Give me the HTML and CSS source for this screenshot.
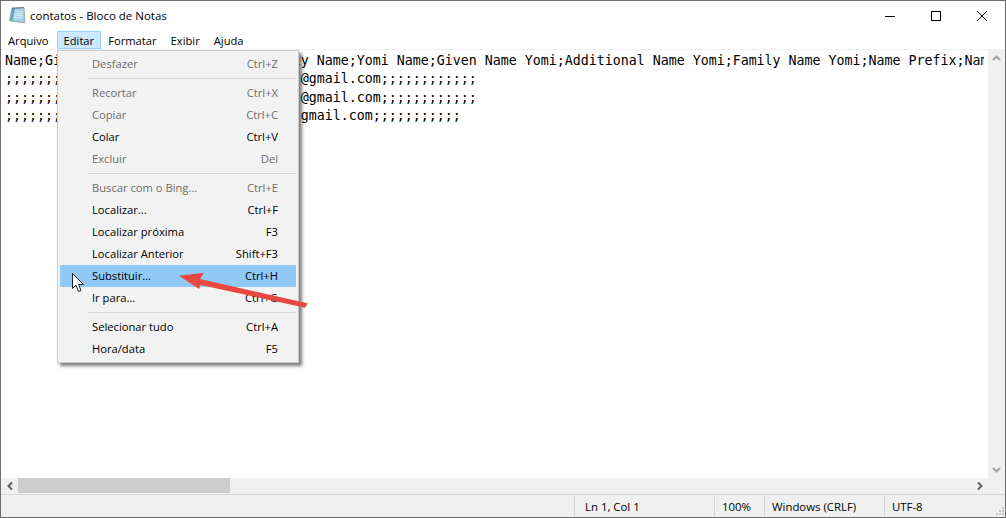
FILE: index.html
```html
<!DOCTYPE html>
<html lang="pt">
<head>
<meta charset="utf-8">
<title>contatos - Bloco de Notas</title>
<link rel="stylesheet" href="styles.css">
</head>
<body>
<div class="window">
  <header class="titlebar">
    <svg class="app-icon" width="18" height="18" viewBox="0 0 18 18">
      <path d="M2 2 L15.500 1 L16.500 16.500 L1 14.500 Z" fill="#c9b98a"/>
      <path d="M3 1.500 L15 0.500 L15.500 15.500 L0.500 13.500 Z" fill="#a6d3e6" stroke="#7fb0c6" stroke-width="0.6"/>
      <path d="M3 1.500 L6 1.300 L3.500 13.900 L0.500 13.500 Z" fill="#5fa6c4"/>
      <path d="M6 5 L13.500 4.500 M5.500 7 L13.500 6.500 M5 9 L13.500 8.500 M4.500 11 L13.500 10.500" stroke="#d4ecf6" stroke-width="1"/>
      <path d="M3.500 1.200 L15 0.400" stroke="#3f4a52" stroke-width="1.600" stroke-dasharray="1 1"/>
    </svg>
    <span class="title">contatos - Bloco de Notas</span>
    <div class="caption">
      <svg class="cap-btn" width="46" height="30" viewBox="0 0 46 30"><path d="M18 15.500H28" stroke="#000"/></svg>
      <svg class="cap-btn" width="46" height="30" viewBox="0 0 46 30"><rect x="18.500" y="10.500" width="9" height="9" fill="none" stroke="#000"/></svg>
      <svg class="cap-btn" width="46" height="30" viewBox="0 0 46 30"><path d="M18 10L28 20M28 10L18 20" stroke="#000"/></svg>
    </div>
  </header>
  <nav class="menubar">
    <span class="menu-item">Arquivo</span>
    <span class="menu-item active">Editar</span>
    <span class="menu-item">Formatar</span>
    <span class="menu-item">Exibir</span>
    <span class="menu-item">Ajuda</span>
  </nav>
  <div class="editor">
    <div class="text-row">
      <pre class="text">Name;Given Name;Additional Name;Family Name;Yomi Name;Given Name Yomi;Additional Name Yomi;Family Name Yomi;Name Prefix;Name Suffix
;;;;;;;;;;;;;;;;;;;;;;;;;;;;;;;;;;;;;@gmail.com;;;;;;;;;;;;
;;;;;;;;;;;;;;;;;;;;;;;;;;;;;;;;;;;;;@gmail.com;;;;;;;;;;;;
;;;;;;;;;;;;;;;;;;;;;;;;;;;;;;;;;;;;;gmail.com;;;;;;;;;;;</pre>
      <div class="vscroll">
        <svg width="17" height="17" viewBox="0 0 17 17"><path d="M5 10L8.500 6.500L12 10" fill="none" stroke="#a3a3a3" stroke-width="2"/></svg>
        <svg width="17" height="17" viewBox="0 0 17 17"><path d="M5 7L8.500 10.500L12 7" fill="none" stroke="#a3a3a3" stroke-width="2"/></svg>
      </div>
    </div>
    <div class="hscroll">
      <svg class="arrow-h" width="17" height="16" viewBox="0 0 17 16"><path d="M11 4.500L7.500 8L11 11.500" fill="none" stroke="#606060" stroke-width="2"/></svg>
      <div class="track"><div class="thumb"></div></div>
      <svg class="arrow-h" width="17" height="16" viewBox="0 0 17 16"><path d="M6 4.500L9.500 8L6 11.500" fill="none" stroke="#606060" stroke-width="2"/></svg>
      <div class="corner"></div>
    </div>
  </div>
  <footer class="statusbar">
    <span class="cell c-pos">Ln 1, Col 1</span>
    <span class="cell c-zoom">100%</span>
    <span class="cell c-eol">Windows (CRLF)</span>
    <span class="cell c-enc">UTF-8</span>
    <svg class="grip" width="12" height="12" viewBox="0 0 12 12"><path d="M9 2h2v2H9zM6 5h2v2H6zM9 5h2v2H9zM3 8h2v2H3zM6 8h2v2H6zM9 8h2v2H9z" fill="#c4c4c4"/></svg>
  </footer>
</div>

<div class="dropdown">
  <div class="row off"><span>Desfazer</span><span>Ctrl+Z</span></div>
  <div class="sep"></div>
  <div class="row off"><span>Recortar</span><span>Ctrl+X</span></div>
  <div class="row off"><span>Copiar</span><span>Ctrl+C</span></div>
  <div class="row"><span>Colar</span><span>Ctrl+V</span></div>
  <div class="row off"><span>Excluir</span><span>Del</span></div>
  <div class="sep"></div>
  <div class="row off"><span>Buscar com o Bing...</span><span>Ctrl+E</span></div>
  <div class="row"><span>Localizar...</span><span>Ctrl+F</span></div>
  <div class="row"><span>Localizar próxima</span><span>F3</span></div>
  <div class="row"><span>Localizar Anterior</span><span>Shift+F3</span></div>
  <div class="row hot"><span>Substituir...</span><span>Ctrl+H</span></div>
  <div class="row"><span>Ir para...</span><span>Ctrl+G</span></div>
  <div class="sep"></div>
  <div class="row"><span>Selecionar tudo</span><span>Ctrl+A</span></div>
  <div class="row"><span>Hora/data</span><span>F5</span></div>
</div>

<svg class="pointer" width="13" height="20" viewBox="0 0 13 20">
  <path d="M0.500 0.500V15.500L4 12.300L6.500 18.500L9 17.500L6.700 11.500H11.500Z" fill="#fff" stroke="#222" stroke-width="1"/>
</svg>
<svg class="red-arrow" width="132" height="37" viewBox="0 0 132 37">
  <path d="M1 3.700L26 0.700L22 7L129.700 31.300L127 35.700L22.600 13L21 17Z" fill="#e8483f"/>
</svg>
</body>
</html>
```
FILE: styles.css
```css
* { box-sizing: border-box; }
html, body { margin: 0; padding: 0; }
body {
  width: 1006px;
  height: 518px;
  overflow: hidden;
  background: #fff;
  font-family: "Open Sans", "Noto Sans", sans-serif;
  font-size: 11.2px;
  color: #000;
  position: relative;
}
.window {
  width: 1006px;
  height: 518px;
  border: 1px solid #6e6e6e;
  display: flex;
  flex-direction: column;
  background: #fff;
}
.titlebar {
  height: 30px;
  flex: none;
  display: flex;
  align-items: center;
  padding-left: 8px;
}
.app-icon { flex: none; margin-right: 3px; }
.title { flex: 1; font-size: 11.5px; padding-bottom: 2px; }
.caption { display: flex; align-items: center; }
.cap-btn { display: block; }
.menubar {
  height: 19px;
  flex: none;
  display: flex;
  align-items: stretch;
  gap: 0;
  border-bottom: 1px solid #f0f0f0;
}
.menu-item {
  padding: 0 6px;
  display: flex;
  align-items: center;
  border: 1px solid transparent;
}
.menu-item.active { background: #cce8ff; border-color: #99d1ff; margin-left: 1px; }
.editor { flex: 1; min-height: 0; display: flex; flex-direction: column; }
.text-row { flex: 1; min-height: 0; display: flex; }
.text {
  flex: 1;
  min-width: 0;
  margin: 0 4px 0 0;
  padding: 2px 0 0 4px;
  overflow: hidden;
  font-family: "DejaVu Sans Mono", "Liberation Mono", monospace;
  font-size: 13.29px;
  line-height: 18.3px;
}
.vscroll {
  width: 17px;
  flex: none;
  background: #f0f0f0;
  display: flex;
  flex-direction: column;
  justify-content: space-between;
}
.hscroll { height: 16px; flex: none; background: #f0f0f0; display: flex; }
.arrow-h { flex: none; }
.track { flex: 1; min-width: 0; }
.thumb { width: 212px; height: 15px; background: #cdcdcd; }
.corner { width: 16px; flex: none; }
.statusbar {
  height: 23px;
  flex: none;
  display: flex;
  align-items: center;
  font-size: 11.4px;
  background: #f0f0f0;
  border-top: 1px solid #d7d7d7;
  position: relative;
  padding-left: 573px;
}
.cell {
  height: 21px;
  display: flex;
  align-items: center;
  border-left: 1px solid #d7d7d7;
  padding-left: 10px;
  flex: none;
}
.c-pos { width: 140px; }
.c-zoom { width: 50px; padding-left: 7px; }
.c-eol { width: 120px; padding-left: 7px; }
.c-enc { width: 120px; padding-left: 7px; }
.grip { position: absolute; right: 0; bottom: 0; }
.dropdown {
  position: absolute;
  left: 57px;
  top: 50px;
  width: 242px;
  height: 313px;
  padding: 2px;
  background: #f2f2f2;
  border: 1px solid #cccccc;
  box-shadow: 3px 3px 3px rgba(0, 0, 0, 0.5);
}
.row {
  height: 22px;
  display: flex;
  justify-content: space-between;
  align-items: center;
  padding: 0 18px 2px 32px;
}
.row.off { color: #6d6d6d; }
.row.hot { background: #91c9f7; }
.sep { height: 7px; margin-left: 28px; position: relative; }
.sep::after {
  content: "";
  position: absolute;
  left: 0;
  right: 0;
  top: 3px;
  height: 1px;
  background: #d7d7d7;
}
.pointer { position: absolute; left: 72px; top: 273px; }
.red-arrow { position: absolute; left: 178px; top: 272px; }
```
